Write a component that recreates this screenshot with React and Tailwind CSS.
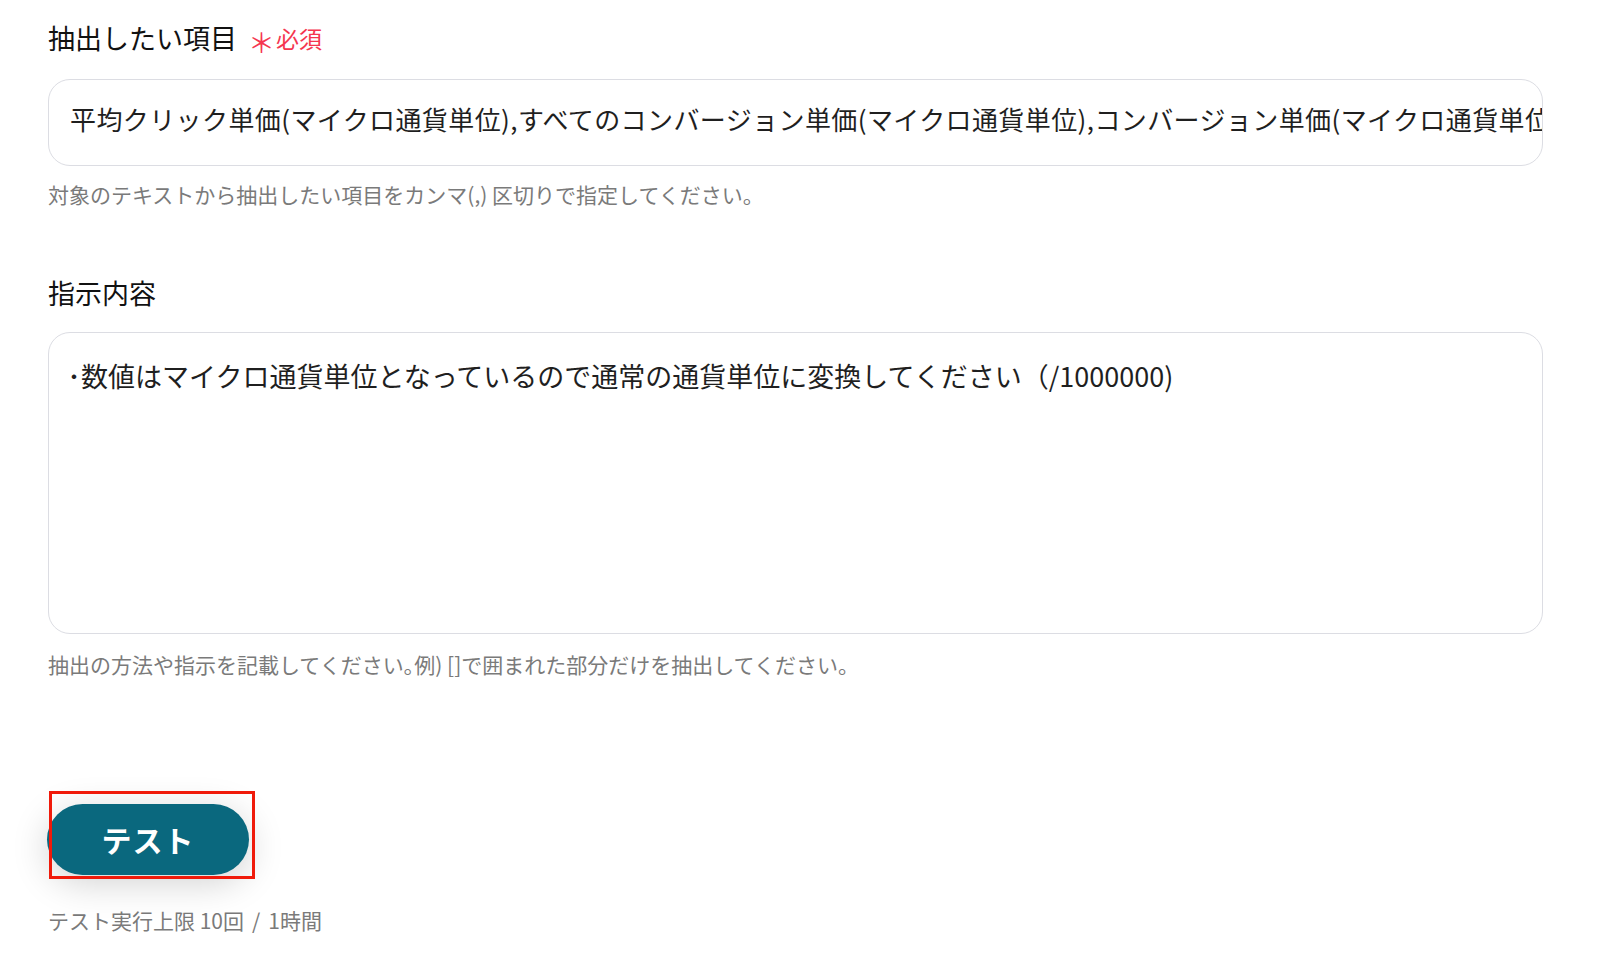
import React from 'react';

const font = { fontFamily: '"Noto Sans CJK JP", "Noto Sans", sans-serif' };

const App = () => {
  return (
    <div className="min-h-[969px] w-full bg-white pl-[48px] pr-[57px] pt-[18px]" style={font}>
      {/* 抽出したい項目 */}
      <div className="flex items-center h-[40px]">
        <span className="text-[27px] text-[#111]">抽出したい項目</span>
        <span className="ml-[11px] text-[23px] text-[#f5364f] flex items-center">
          <span className="text-[27px] mr-[1px] leading-none relative top-[3px]">＊</span>
          必須
        </span>
      </div>
      <div className="mt-[21px] h-[87px] rounded-[22px] border border-[#dcdde3] pl-[21px] pb-[8px] flex items-center overflow-hidden">
        <span className="whitespace-nowrap text-[26px] tracking-[0.4px] text-[#1f1f1f]">
          平均クリック単価(マイクロ通貨単位),すべてのコンバージョン単価(マイクロ通貨単位),コンバージョン単価(マイクロ通貨単位)
        </span>
      </div>
      <p className="mt-[14px] leading-[28px] text-[21px] text-[#7a7a7a]">
        対象のテキストから抽出したい項目をカンマ(,) 区切りで指定してください。
      </p>

      {/* 指示内容 */}
      <div className="mt-[65px] flex items-center h-[40px]">
        <span className="text-[27px] text-[#111]">指示内容</span>
      </div>
      <div className="mt-[19px] h-[302px] rounded-[22px] border border-[#dcdde3] pl-[18px] pt-[23px]">
        <p className="leading-[40px] text-[27px] text-[#1f1f1f]">
          <span className="inline-block w-[14px] text-center">･</span>数値はマイクロ通貨単位となっているので通常の通貨単位に変換してください（/1000000)
        </p>
      </div>
      <p className="mt-[16px] leading-[28px] text-[21px] text-[#7a7a7a]">
        抽出の方法や指示を記載してください｡例) []で囲まれた部分だけを抽出してください。
      </p>

      {/* テスト */}
      <div className="mt-[126px] relative w-fit">
        <button className="h-[71px] w-[202px] -ml-[1px] rounded-full bg-[#0a687e] text-white text-[30px] font-bold tracking-[1px] shadow-[0_8px_36px_rgba(0,0,0,0.18)]">
          テスト
        </button>
        <div className="absolute left-[1px] top-[-13px] w-[206px] h-[88px] border-[3px] border-[#f01a0a] pointer-events-none" />
      </div>
      <p className="mt-[31px] leading-[28px] text-[21px] text-[#7a7a7a]">
        テスト実行上限 10回<span className="mx-[8px]">/</span>1時間
      </p>
    </div>
  );
};

export default App;
